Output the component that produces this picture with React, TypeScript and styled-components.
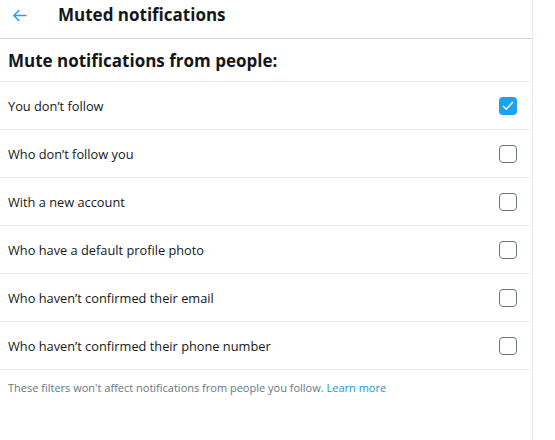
import React, { useState } from 'react'
import styled, { createGlobalStyle } from 'styled-components'

const GlobalStyle = createGlobalStyle`
    body {
        margin: 0;
        background: #ffffff;
        font-family: "Open Sans", "Noto Sans", sans-serif;
        color: #14171a;
    }
`

const options = [
    { id: 'notFollowing', label: 'You don\u2019t follow', checked: true },
    { id: 'notFollowedBy', label: 'Who don\u2019t follow you', checked: false },
    { id: 'newAccount', label: 'With a new account', checked: false },
    { id: 'defaultPhoto', label: 'Who have a default profile photo', checked: false },
    { id: 'noEmail', label: 'Who haven\u2019t confirmed their email', checked: false },
    { id: 'noPhone', label: 'Who haven\u2019t confirmed their phone number', checked: false }
]

const App: React.FC = () => {
    const [values, setValues] = useState<Record<string, boolean>>(() =>
        Object.fromEntries(options.map((o) => [o.id, o.checked]))
    )
    const toggle = (id: string) =>
        setValues((prev) => ({ ...prev, [id]: !prev[id] }))
    return (
        <>
            <GlobalStyle />
            <Panel>
                <Header>
                    <BackButton aria-label="Back">
                        <svg width="17" height="17" viewBox="0 0 24 24">
                            <path
                                d="M21 12H4M11 5l-7 7 7 7"
                                fill="none"
                                stroke="#1da1f2"
                                strokeWidth="2"
                                strokeLinecap="round"
                                strokeLinejoin="round"
                            />
                        </svg>
                    </BackButton>
                    <Title>Muted notifications</Title>
                </Header>
                <SectionTitle>Mute notifications from people:</SectionTitle>
                {options.map((o) => (
                    <Row key={o.id} onClick={() => toggle(o.id)}>
                        <RowLabel>{o.label}</RowLabel>
                        <Box checked={values[o.id]}>
                            {values[o.id] && (
                                <svg width="14" height="14" viewBox="0 0 24 24">
                                    <path
                                        d="M4 12.5l5 5L20 5.5"
                                        fill="none"
                                        stroke="#fff"
                                        strokeWidth="2.2"
                                        strokeLinecap="round"
                                        strokeLinejoin="round"
                                    />
                                </svg>
                            )}
                        </Box>
                    </Row>
                ))}
                <Footer>
                    These filters won't affect notifications from people you
                    follow. <FooterLink href="#">Learn more</FooterLink>
                </Footer>
            </Panel>
        </>
    )
}

export default App

const Panel = styled.div`
    width: 532px;
    min-height: 440px;
    border-right: 1px solid #e6ecf0;
`

const Header = styled.div`
    height: 39px;
    box-sizing: border-box;
    display: flex;
    align-items: flex-start;
    padding: 3px 0 0 11px;
    border-bottom: 1px solid #ccd6dd;
`

const BackButton = styled.button`
    border: 0;
    background: none;
    padding: 0;
    width: 17px;
    height: 24px;
    display: flex;
    align-items: center;
    cursor: pointer;
`

const Title = styled.h2`
    margin: 0 0 0 30px;
    font-size: 17px;
    line-height: 24px;
    font-weight: 700;
`

const SectionTitle = styled.h3`
    margin: 0;
    height: 43px;
    box-sizing: border-box;
    padding: 0 8px;
    display: flex;
    align-items: center;
    font-size: 17px;
    font-weight: 700;
    border-bottom: 1px solid #e6ecf0;
`

const Row = styled.label`
    height: 48px;
    box-sizing: border-box;
    display: flex;
    align-items: center;
    justify-content: space-between;
    padding: 0 15px 0 8px;
    border-bottom: 1px solid #e6ecf0;
    cursor: pointer;
`

const RowLabel = styled.span`
    font-size: 12.8px;
    color: #14171a;
`

const Box = styled.span<{ checked: boolean }>`
    width: 18px;
    height: 18px;
    box-sizing: border-box;
    border-radius: 4px;
    display: flex;
    align-items: center;
    justify-content: center;
    background: ${(p) => (p.checked ? '#1da1f2' : '#fff')};
    border: ${(p) => (p.checked ? 'none' : '1.5px solid #657786')};
`

const Footer = styled.p`
    margin: 0;
    padding: 10px 8px;
    font-size: 11px;
    color: #657786;
`

const FooterLink = styled.a`
    color: #1b95e0;
    text-decoration: none;
`
